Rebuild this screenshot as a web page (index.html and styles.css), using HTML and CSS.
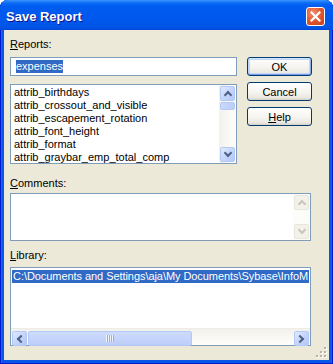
FILE: index.html
```html
<!DOCTYPE html>
<html>
<head>
  <title>Save Report</title>
  <link rel="stylesheet" href="styles.css">
</head>
<body>

<div class="window">
  <div class="titlebar">
    <span class="title">Save Report</span>
    <div class="close">
      <svg width="11" height="11" viewBox="0 0 11 11"><path d="M1.5 1.5 L9.5 9.5 M9.5 1.5 L1.5 9.5" stroke="#fff" stroke-width="2.2" stroke-linecap="square"/></svg>
    </div>
  </div>

  <div class="client">
    <div class="top">
      <div class="reports">
        <label class="label"><u>R</u>eports:</label>
        <div class="textbox"><span class="selected">expenses</span></div>
        <div class="listbox">
          <div class="items">
            <div class="item">attrib_birthdays</div>
            <div class="item">attrib_crossout_and_visible</div>
            <div class="item">attrib_escapement_rotation</div>
            <div class="item">attrib_font_height</div>
            <div class="item">attrib_format</div>
            <div class="item">attrib_graybar_emp_total_comp</div>
          </div>
          <div class="vscroll">
            <div class="sbtn up"></div>
            <div class="vthumb"></div>
            <div class="track"></div>
            <div class="sbtn down"></div>
          </div>
        </div>
      </div>

      <div class="buttons">
        <button class="btn default">OK</button>
        <button class="btn">Cancel</button>
        <button class="btn"><u>H</u>elp</button>
      </div>
    </div>

    <label class="label comments-label"><u>C</u>omments:</label>
    <div class="comments">
      <div class="items"></div>
      <div class="vscroll disabled">
        <div class="sbtn up"></div>
        <div class="track"></div>
        <div class="sbtn down"></div>
      </div>
    </div>

    <label class="label library-label"><u>L</u>ibrary:</label>
    <div class="library">
      <div class="rows">
        <div class="row selected">C:\Documents and Settings\aja\My Documents\Sybase\InfoM</div>
      </div>
      <div class="hscroll">
        <div class="sbtn left"></div>
        <div class="hthumb"></div>
        <div class="track"></div>
        <div class="sbtn right"></div>
      </div>
    </div>

    <div class="grip">
      <svg width="12" height="12" viewBox="0 0 12 12">
        <rect x="9" y="1" width="2" height="2" fill="#fff"/>
        <rect x="8" y="0" width="2" height="2" fill="#b8b3a3"/>
        <rect x="5" y="5" width="2" height="2" fill="#fff"/>
        <rect x="4" y="4" width="2" height="2" fill="#b8b3a3"/>
        <rect x="9" y="5" width="2" height="2" fill="#fff"/>
        <rect x="8" y="4" width="2" height="2" fill="#b8b3a3"/>
        <rect x="1" y="9" width="2" height="2" fill="#fff"/>
        <rect x="0" y="8" width="2" height="2" fill="#b8b3a3"/>
        <rect x="5" y="9" width="2" height="2" fill="#fff"/>
        <rect x="4" y="8" width="2" height="2" fill="#b8b3a3"/>
        <rect x="9" y="9" width="2" height="2" fill="#fff"/>
        <rect x="8" y="8" width="2" height="2" fill="#b8b3a3"/>
      </svg>
    </div>
  </div>
</div>

</body>
</html>
```

FILE: styles.css
```css
* {
  box-sizing: border-box;
}

html, body {
  margin: 0;
  padding: 0;
  background: #fff;
}

body {
  font-family: "Liberation Sans", Arial, sans-serif;
  font-size: 11px;
  color: #000;
}

/* Window frame */
.window {
  width: 333px;
  height: 364px;
  display: flex;
  flex-direction: column;
  padding: 0 4px 4px;
  background: #0856e6;
  border-radius: 8px 8px 0 0;
  box-shadow: inset 1px 0 #0019cf, inset -1px 0 #0019cf, inset 0 -1px #0019cf, inset 2px 0 #166aee, inset -2px 0 #0e5ce8;
}

.titlebar {
  height: 30px;
  margin: 0 -4px;
  padding: 3px 8px 0 6px;
  display: flex;
  align-items: center;
  justify-content: space-between;
  border-radius: 8px 8px 0 0;
  background: linear-gradient(to bottom, #3d95ff 0px, #0a6cf5 3px, #005cf0 6px, #0058ee 18px, #0055e6 27px, #0048d8 30px);
}

.title {
  color: #fff;
  font-weight: bold;
  font-size: 13px;
  text-shadow: 1px 1px #0f1089;
}

.close {
  width: 19px;
  height: 19px;
  border: 1px solid #fff;
  border-radius: 3px;
  display: flex;
  align-items: center;
  justify-content: center;
  background: radial-gradient(circle at 35% 30%, #f08c6c 0, #e0532d 55%, #c8401c 100%);
}

/* Client area */
.client {
  flex: 1;
  display: flex;
  flex-direction: column;
  padding: 8px 0 0 6px;
  background: #ece9d8;
}

.label {
  display: block;
  height: 13px;
  line-height: 13px;
}

.top {
  display: flex;
}

.reports {
  width: 227px;
}

.textbox {
  margin-top: 6px;
  height: 19px;
  padding: 2px 0 0 5px;
  border: 1px solid #7f9db9;
  background: #fff;
}

.selected {
  display: inline-block;
  line-height: 13px;
  background: #316ac5;
  color: #fff;
}

.listbox {
  margin-top: 8px;
  height: 80px;
  display: flex;
  border: 1px solid #7f9db9;
  background: #fff;
}

.items {
  flex: 1;
  overflow: hidden;
  padding: 1px 0 0 3px;
}

.item {
  height: 13px;
  line-height: 13px;
  white-space: nowrap;
}

/* Buttons */
.buttons {
  margin: 19px 0 0 10px;
  display: flex;
  flex-direction: column;
  gap: 6px;
}

.btn {
  width: 65px;
  height: 19px;
  padding: 0;
  font-family: "Liberation Sans", Arial, sans-serif;
  font-size: 11px;
  color: #000;
  border: 1px solid #003c74;
  border-radius: 3px;
  background: linear-gradient(to bottom, #ffffff 0, #f5f4f0 55%, #ebe9e1 85%, #d6d0c5 100%);
}

.btn.default {
  box-shadow: inset 0 1px #cee7ff, inset 0 -1px #7a9ae8, inset 1px 0 #bcd4f6, inset -1px 0 #8eaee8, inset 0 0 0 2px #c5d7f7;
}

/* Scrollbars */
.vscroll {
  width: 17px;
  display: flex;
  flex-direction: column;
  padding: 0 0 0 1px;
  background: linear-gradient(to right, #f3f1ec, #fefefb);
}

.hscroll {
  height: 17px;
  display: flex;
  padding: 1px 1px 0;
  border-top: 1px solid #eeede5;
  background: linear-gradient(to bottom, #f3f1ec, #fefefb);
}

.track {
  flex: 1;
}

.sbtn {
  width: 15px;
  height: 15px;
  margin: 1px 0;
  display: flex;
  align-items: center;
  justify-content: center;
  border: 1px solid #b4c8f6;
  border-radius: 2px;
  background: linear-gradient(135deg, #e1eafe 0, #c5d5fc 50%, #b4c8f6 100%);
}

.sbtn::after {
  content: "";
  width: 4px;
  height: 4px;
  border-left: 2px solid #4d6185;
  border-top: 2px solid #4d6185;
}

.sbtn.up::after {
  margin-top: 3px;
  transform: rotate(45deg);
}

.sbtn.down::after {
  margin-top: -3px;
  transform: rotate(225deg);
}

.sbtn.left::after {
  margin-left: 3px;
  transform: rotate(-45deg);
}

.sbtn.right::after {
  margin-left: -3px;
  transform: rotate(135deg);
}

.vthumb {
  height: 8px;
  width: 15px;
  border: 1px solid #b4c8f6;
  border-radius: 2px;
  background: linear-gradient(to right, #cad8fd, #bccdf9);
}

.hthumb {
  width: 164px;
  height: 15px;
  margin: 1px 0 0 1px;
  display: flex;
  align-items: center;
  justify-content: center;
  border: 1px solid #b4c8f6;
  border-radius: 2px;
  background: linear-gradient(to bottom, #cddbfe, #bccdf9);
}

.hthumb::after {
  content: "";
  width: 8px;
  height: 7px;
  background: repeating-linear-gradient(to right, #eef4fe 0, #eef4fe 1px, #8cb0f8 1px, #8cb0f8 2px);
}

.vscroll.disabled {
  background: #fcfcf9;
}

.vscroll.disabled .sbtn {
  border-color: #e8e6db;
  background: #f2f1ea;
}

.vscroll.disabled .sbtn::after {
  border-color: #cac8bb;
}

/* Comments and library */
.comments-label {
  margin-top: 13px;
}

.comments {
  margin-top: 3px;
  width: 301px;
  height: 48px;
  display: flex;
  border: 1px solid #7f9db9;
  background: #fff;
}

.library-label {
  margin-top: 8px;
}

.library {
  margin-top: 5px;
  width: 301px;
  height: 79px;
  display: flex;
  flex-direction: column;
  border: 1px solid #7f9db9;
  background: #fff;
}

.rows {
  flex: 1;
  overflow: hidden;
}

.row {
  margin: 2px 1px 0;
  height: 13px;
  line-height: 13px;
  padding-left: 1px;
  letter-spacing: -0.06px;
  white-space: nowrap;
  overflow: hidden;
}

.row.selected {
  display: block;
  background: #316ac5;
  color: #fff;
}

.grip {
  margin: 1px 1px 0 0;
  align-self: flex-end;
  width: 12px;
  height: 12px;
}
```
